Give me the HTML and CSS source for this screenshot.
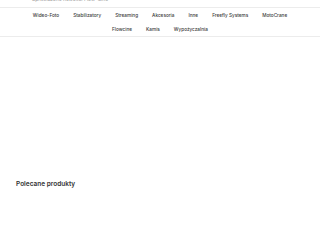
FILE: index.html
```html
<!DOCTYPE html>
<html lang="pl">
<head>
<meta charset="utf-8">
<link rel="stylesheet" href="styles.css">
</head>
<body>
<div class="topbar"><span class="toptext">Sprawdzone nowości Flow-Cine</span></div>
<nav class="nav">
  <div class="nav-row">
    <a>Wideo-Foto</a><a>Stabilizatory</a><a>Streaming</a><a>Akcesoria</a><a>Inne</a><a>Freefly Systems</a><a>MotoCrane</a>
  </div>
  <div class="nav-row">
    <a>Flowcine</a><a>Kamis</a><a>Wypożyczalnia</a>
  </div>
</nav>
<main class="content">
  <h2 class="section-title">Polecane produkty</h2>
</main>
</body>
</html>
```
FILE: styles.css
```css
html, body { margin: 0; padding: 0; background: #fff; }
body { font-family: Inter, "Noto Sans", sans-serif; color: #333; }
.topbar { height: 7px; overflow: hidden; padding-left: 32px; }
.toptext { display: block; font-size: 5px; line-height: 5px; margin-top: -3.5px; color: #999; }
.nav { border-top: 1px solid #ececec; border-bottom: 1px solid #ececec; }
.nav-row { display: flex; justify-content: center; gap: 14px; height: 14px; align-items: center; }
.nav-row a { font-size: 4.7px; font-weight: 500; color: #3a3a3a; }
.content { padding: 0 16px; }
.section-title { margin: 142px 0 0; font-size: 6.5px; font-weight: 600; color: #333; line-height: 10px; }
```
